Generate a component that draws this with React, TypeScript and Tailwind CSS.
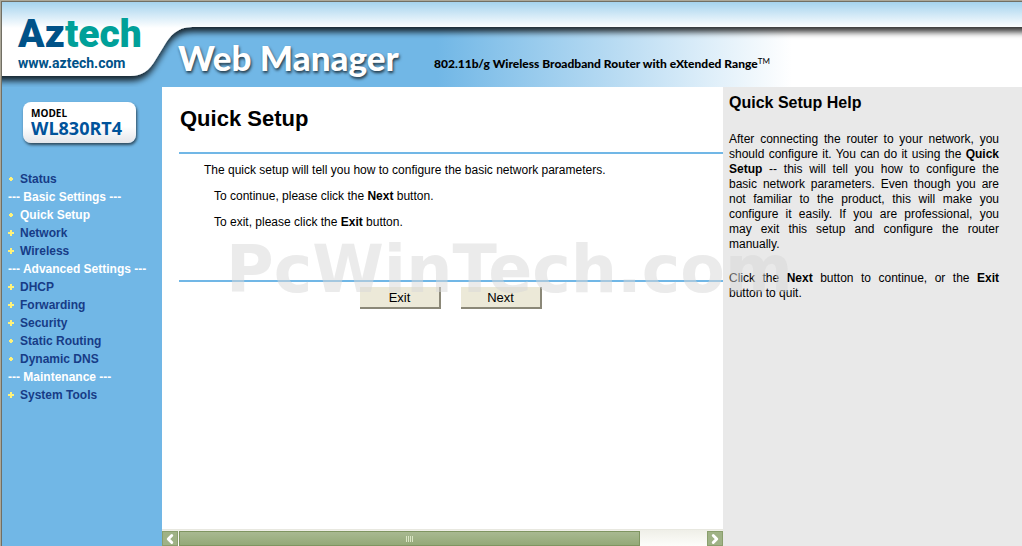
import { ChevronLeft, ChevronRight } from "lucide-react";

type NavItem = {
  label: string;
  kind: "page" | "group" | "heading";
};

const NAV: NavItem[] = [
  { label: "Status", kind: "page" },
  { label: "Basic Settings", kind: "heading" },
  { label: "Quick Setup", kind: "page" },
  { label: "Network", kind: "group" },
  { label: "Wireless", kind: "group" },
  { label: "Advanced Settings", kind: "heading" },
  { label: "DHCP", kind: "group" },
  { label: "Forwarding", kind: "group" },
  { label: "Security", kind: "group" },
  { label: "Static Routing", kind: "page" },
  { label: "Dynamic DNS", kind: "page" },
  { label: "Maintenance", kind: "heading" },
  { label: "System Tools", kind: "group" },
];

const CURRENT = "Quick Setup";

// Yellow marker: a plus for expandable groups, a dot for single pages.
function Bullet({ kind }: { kind: NavItem["kind"] }) {
  return (
    <svg width="6" height="6" viewBox="0 0 6 6" fill="#fff27a" aria-hidden="true">
      {kind === "group" ? (
        <path d="M2 0h2v2h2v2H4v2H2V4H0V2h2z" />
      ) : (
        <path d="M2 1h2v1h1v2H4v1H2V4H1V2h1z" />
      )}
    </svg>
  );
}

// Banner backdrop: blue fading out to the right, with the raised white tab
// and the pale strip over it casting a soft shadow.
function BannerArt() {
  return (
    <svg className="absolute inset-0 h-full w-full" aria-hidden="true">
      <defs>
        <linearGradient id="fade" gradientUnits="userSpaceOnUse" x1="435" y1="0" x2="790" y2="0">
          <stop offset="0" stopColor="#71b7e6" />
          <stop offset="1" stopColor="#fff" />
        </linearGradient>
        <linearGradient id="sky" gradientUnits="userSpaceOnUse" x1="0" y1="0" x2="0" y2="26">
          <stop offset="0" stopColor="#a5d3ee" />
          <stop offset="1" stopColor="#fff" />
        </linearGradient>
        <filter id="cast" filterUnits="userSpaceOnUse" x="-20" y="-20" width="4040" height="140">
          <feDropShadow dx="0" dy="5" stdDeviation="3" floodColor="#000" floodOpacity="0.8" />
        </filter>
      </defs>
      <rect width="4000" height="85" fill="url(#fade)" />
      <path
        d="M-20 -20H4020V25H190C175 25 168 34 162 44L154 57C147 69 140 74 128 74H-20Z"
        fill="url(#sky)"
        filter="url(#cast)"
      />
    </svg>
  );
}

function Banner() {
  return (
    <header className="relative h-[85px] overflow-hidden">
      <BannerArt />
      <div className="relative flex h-full font-[Lato,sans-serif]">
        <a href="#home" className="w-[176px] shrink-0 pl-4 pt-2.5 font-[Roboto,sans-serif] text-[#005288]">
          <span className="block text-[39px] font-black leading-[44px]">
            Az<span className="text-[#00a099]">tech</span>
          </span>
          <span className="block text-[14px] font-bold leading-[14px]">www.aztech.com</span>
        </a>
        <h1 className="w-[256px] shrink-0 pt-8 text-[35px] font-black leading-[46px] text-white [text-shadow:1px_2px_3px_rgba(0,0,0,0.7)]">
          Web Manager
        </h1>
        <p className="whitespace-nowrap pt-[54px] text-[12px] font-black leading-4 text-black">
          802.11b/g Wireless Broadband Router with eXtended Range
          <sup className="text-[8px] font-normal">TM</sup>
        </p>
      </div>
    </header>
  );
}

function Sidebar() {
  return (
    <aside className="w-[160px] shrink-0 bg-[#71b7e6]">
      <div className="ml-[21px] mt-[15px] h-[41px] w-[113px] rounded-lg bg-linear-to-b from-white from-60% to-[#e4e6ea] pl-2 pt-1.5 font-['Open_Sans',sans-serif] font-bold shadow-[1px_2px_3px_rgba(0,0,0,0.6)]">
        <div className="text-[10px] leading-[10px] text-black">MODEL</div>
        <div className="text-[18px] leading-5 text-[#00539b]">WL830RT4</div>
      </div>
      <nav className="mt-[27px]">
        <ul className="text-[12px] font-bold leading-[18px]">
          {NAV.map((item) =>
            item.kind === "heading" ? (
              <li key={item.label} className="whitespace-nowrap pl-1.5 text-white">
                --- {item.label} ---
              </li>
            ) : (
              <li key={item.label}>
                <a
                  href="#nav"
                  className={`flex items-center gap-1.5 pl-1.5 ${
                    item.label === CURRENT ? "text-white" : "text-[#173c86]"
                  }`}
                >
                  <Bullet kind={item.kind} />
                  {item.label}
                </a>
              </li>
            ),
          )}
        </ul>
      </nav>
    </aside>
  );
}

function WizardButton({ children }: { children: string }) {
  return (
    <button
      type="button"
      className="h-[22px] w-[81px] border-b-2 border-r-2 border-b-[#8b8878] border-r-[#8b8878] bg-[#ece9d8] pt-px text-[13px] leading-5 text-black"
    >
      {children}
    </button>
  );
}

function ScrollBar() {
  const arrow =
    "flex w-4 shrink-0 items-center justify-center border border-[#8a9f6d] bg-[#9fb286] text-white";
  return (
    <div className="mt-auto flex h-[17px] border-t border-[#e8e8e0] bg-linear-to-b from-[#efefe8] to-[#fdfdfa] pt-px">
      <button type="button" aria-label="Scroll left" className={arrow}>
        <ChevronLeft size={14} strokeWidth={5} />
      </button>
      <div className="flex flex-1 px-px">
        <div className="flex w-7/8 items-center justify-center gap-px border border-[#7f9561] bg-linear-to-b from-[#a8b991] to-[#94a978]">
          <span className="h-1.5 w-px bg-[#dbe6c5]" />
          <span className="h-1.5 w-px bg-[#dbe6c5]" />
          <span className="h-1.5 w-px bg-[#dbe6c5]" />
          <span className="h-1.5 w-px bg-[#dbe6c5]" />
        </div>
      </div>
      <button type="button" aria-label="Scroll right" className={arrow}>
        <ChevronRight size={14} strokeWidth={5} />
      </button>
    </div>
  );
}

function QuickSetup() {
  return (
    <main className="flex min-w-0 flex-1 flex-col bg-white">
      <section className="pl-[17px]">
        <h2 className="pl-px pt-[18px] text-[22px] font-bold leading-[28px]">Quick Setup</h2>
        <div className="mt-[19px] h-[130px] border-y-2 border-[#71b7e6] pl-[25px] pt-[7px] text-[12px] leading-[18px]">
          <p>The quick setup will tell you how to configure the basic network parameters.</p>
          <p className="mt-2 pl-2.5">
            To continue, please click the <b>Next</b> button.
          </p>
          <p className="mt-2 pl-2.5">
            To exit, please click the <b>Exit</b> button.
          </p>
        </div>
        <div className="mt-[5px] flex justify-center gap-5">
          <WizardButton>Exit</WizardButton>
          <WizardButton>Next</WizardButton>
        </div>
      </section>
      <ScrollBar />
    </main>
  );
}

function Help() {
  return (
    <aside className="w-[299px] shrink-0 bg-[#e9e9e9] pl-1.5 pr-[23px] pt-1.5">
      <h2 className="text-[16px] font-bold leading-5">Quick Setup Help</h2>
      <div className="mt-[19px] text-justify text-[12px] leading-[15px]">
        <p>
          After connecting the router to your network, you should configure it. You can do it using
          the <b>Quick Setup</b> -- this will tell you how to configure the basic network
          parameters. Even though you are not familiar to the product, this will make you configure
          it easily. If you are professional, you may&nbsp;exit this setup and configure the router
          manually.
        </p>
        <p className="mt-[19px]">
          Click the <b>Next</b> button to continue, or the <b>Exit</b> button to quit.
        </p>
      </div>
    </aside>
  );
}

export default function App() {
  return (
    <div className="relative flex min-h-screen flex-col border-l border-t border-[#aca899] bg-white font-['Liberation_Sans',Arial,sans-serif] text-black">
      <div className="flex flex-1 flex-col border-l border-t border-[#716f64]">
        <Banner />
        <div className="flex flex-1">
          <Sidebar />
          <QuickSetup />
          <Help />
        </div>
      </div>
      <div className="pointer-events-none absolute left-[225px] top-[232px] font-['DejaVu_Sans',sans-serif] text-[65px] font-bold leading-[74px] text-[#d8d8d8]/50">
        PcWinTech.com
      </div>
    </div>
  );
}
